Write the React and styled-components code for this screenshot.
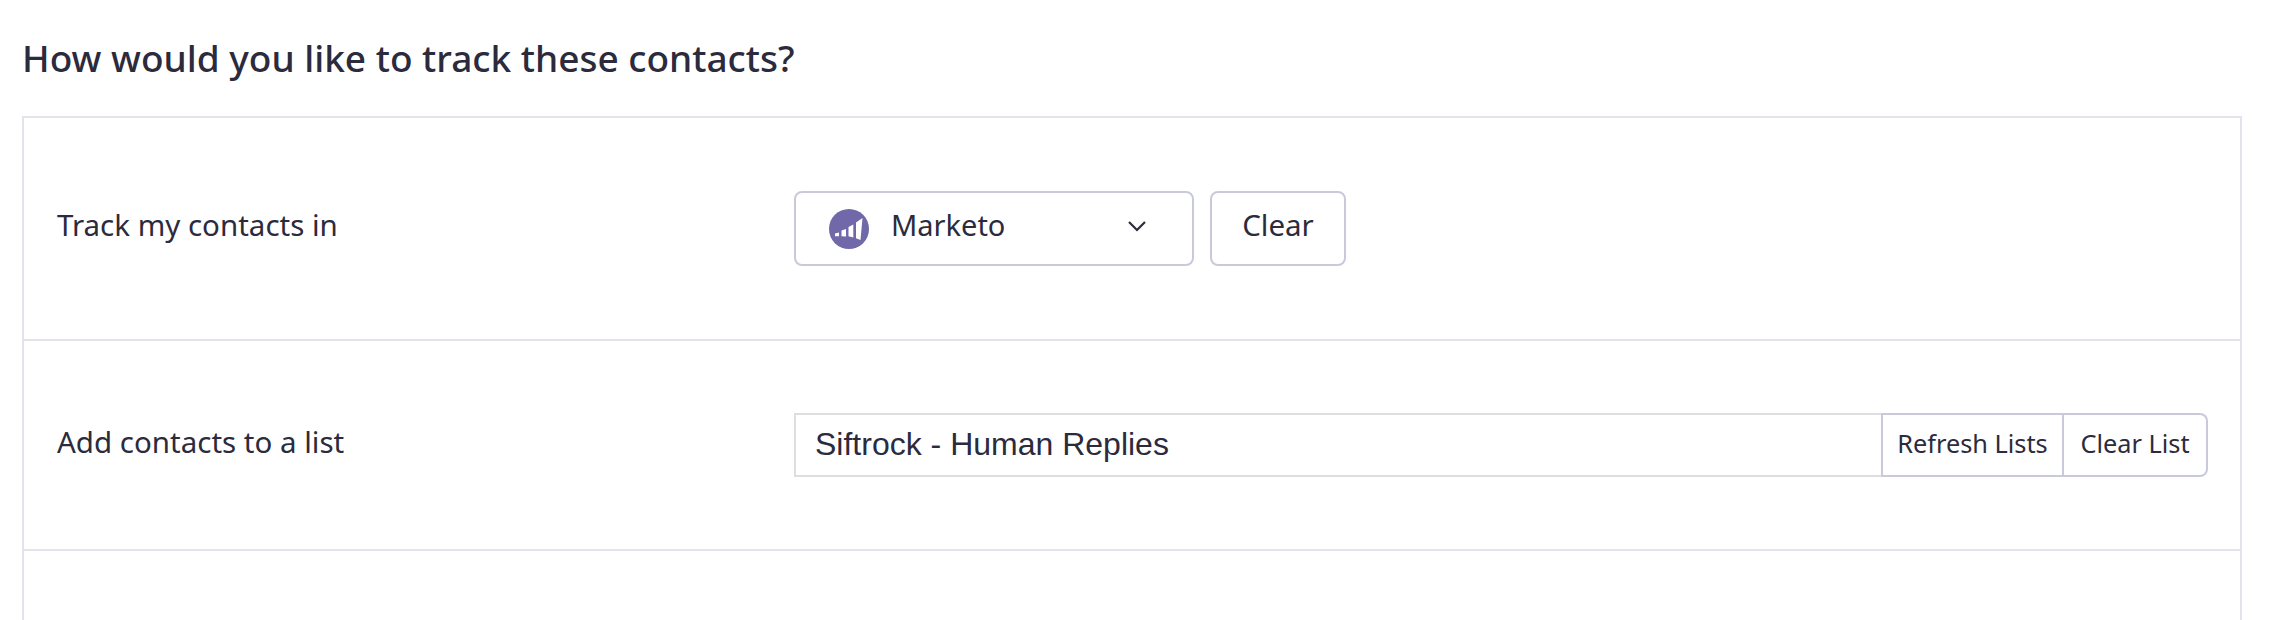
import React from "react";
import styled, { createGlobalStyle } from "styled-components";

const Global = createGlobalStyle`
  html, body { margin: 0; padding: 0; background: #fff; overflow: hidden; height: 620px; }
  body { font-family: "Noto Sans", sans-serif; color: #2b2b3d; }
`;
const Page = styled.div`
  padding: 32px 32px 0 22px;
`;
const Title = styled.h2`
  margin: 0 0 32px 0;
  font-size: 37px;
  line-height: 52px;
  font-weight: 500;
  color: #2b2b3d;
`;
const Card = styled.div`
  box-sizing: border-box;
  border: 2px solid #e3e3ec;
  border-bottom: 0;
  height: 504px;
`;
const Row = styled.div`
  box-sizing: content-box;
  display: grid;
  grid-template-columns: 737px 1fr;
  align-items: center;
  height: ${(p) => p.$height}px;
  padding: 0 32px 0 33px;
  border-bottom: 2px solid #e3e3ec;
`;
const Label = styled.div`
  font-size: 29.5px;
  line-height: 40px;
  color: #2b2b3d;
  padding-bottom: 7px;
`;
const Controls = styled.div`
  display: flex;
  gap: 16px;
`;
const Select = styled.div`
  width: 400px;
  height: 75px;
  box-sizing: border-box;
  display: flex;
  align-items: center;
  padding: 0 45px 0 33px;
  border: 2px solid #c8c9da;
  border-radius: 8px;
  font-size: 29px;
`;
const SelectText = styled.span`
  flex: 1;
  margin-left: 22px;
  padding-bottom: 8px;
`;
const ChevronSlot = styled.span`
  display: flex;
  padding-bottom: 6px;
`;
const OutlineButton = styled.button`
  width: 136px;
  height: 75px;
  background: #fff;
  border: 2px solid #c8c9da;
  border-radius: 8px;
  font: 400 29.5px "Noto Sans", sans-serif;
  color: #2b2b3d;
  padding: 0 0 8px;
`;
const InputGroup = styled.div`
  display: flex;
  height: 64px;
  margin-top: -1px;
`;
const ListInput = styled.div`
  flex: 1;
  box-sizing: border-box;
  border: 2px solid #dedee2;
  border-right: 0;
  padding: 0 0 0 19px;
  display: flex;
  align-items: center;
  font: 400 32px "Liberation Sans", sans-serif;
  color: #2b2b3d;
`;
const GroupButton = styled.button`
  width: ${(p) => p.$width}px;
  box-sizing: border-box;
  background: #fff;
  border: 2px solid #c8c9da;
  border-left-width: ${(p) => (p.$joined ? 0 : 2)}px;
  border-radius: ${(p) => (p.$last ? "0 8px 8px 0" : "0")};
  font: 400 25.3px "Noto Sans", sans-serif;
  color: #2b2b3d;
  padding: 0 0 4px;
`;

const MarketoIcon = () => (
  <svg width="40" height="40" viewBox="0 0 40 40" aria-hidden="true">
    <circle cx="20" cy="20" r="20" fill="#7068a8" />
    <g fill="#fff">
      <path d="M6 24.500l4-1v3.700H6z" />
      <path d="M12.500 21.500l4.500-1.500v7.500l-4.500-.3z" />
      <path d="M19.500 18l4.800-2.500v13l-4.800-1.200z" />
      <path d="M27 13.500l6.500-4.500-2 22-4.500-1.800z" />
    </g>
  </svg>
);
const Chevron = () => (
  <svg width="20" height="12" viewBox="0 0 20 12" fill="none" aria-hidden="true">
    <path d="M2 2l8 8 8-8" stroke="#2b2b3d" strokeWidth="2.2" />
  </svg>
);

export default function App() {
  return (
    <Page>
      <Global />
      <Title>How would you like to track these contacts?</Title>
      <Card>
        <Row $height={221}>
          <Label>Track my contacts in</Label>
          <Controls>
            <Select>
              <MarketoIcon />
              <SelectText>Marketo</SelectText>
              <ChevronSlot><Chevron /></ChevronSlot>
            </Select>
            <OutlineButton>Clear</OutlineButton>
          </Controls>
        </Row>
        <Row $height={208}>
          <Label>Add contacts to a list</Label>
          <InputGroup>
            <ListInput>Siftrock - Human Replies</ListInput>
            <GroupButton $width={183}>Refresh Lists</GroupButton>
            <GroupButton $width={144} $joined $last>Clear List</GroupButton>
          </InputGroup>
        </Row>
      </Card>
    </Page>
  );
}
